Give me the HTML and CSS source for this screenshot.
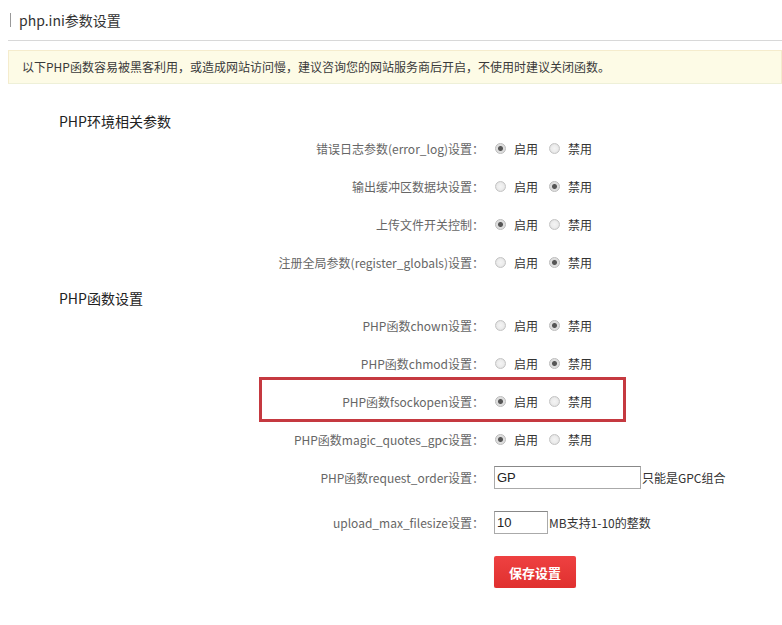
FILE: index.html
```html
<!DOCTYPE html>
<html lang="zh-CN">
<head>
    <meta charset="UTF-8">
    <meta name="viewport" content="width=device-width, initial-scale=1.0">
    <title>php.ini参数设置</title>
    <link rel="stylesheet" href="styles.css">
</head>
<body>
    <div class="page">
        <!-- Page Title -->
        <div class="page-title"><span>php.ini参数设置</span></div>

        <!-- Notice -->
        <div class="notice">以下PHP函数容易被黑客利用，或造成网站访问慢，建议咨询您的网站服务商后开启，不使用时建议关闭函数。</div>

        <div class="settings">
            <!-- Environment -->
            <h3>PHP环境相关参数</h3>
            <div class="form-row">
                <label class="row-label">错误日志参数(error_log)设置：</label>
                <div class="radio-group">
                    <label><input type="radio" name="error_log" checked>启用</label>
                    <label><input type="radio" name="error_log">禁用</label>
                </div>
            </div>
            <div class="form-row">
                <label class="row-label">输出缓冲区数据块设置：</label>
                <div class="radio-group">
                    <label><input type="radio" name="output_buffering">启用</label>
                    <label><input type="radio" name="output_buffering" checked>禁用</label>
                </div>
            </div>
            <div class="form-row">
                <label class="row-label">上传文件开关控制：</label>
                <div class="radio-group">
                    <label><input type="radio" name="file_uploads" checked>启用</label>
                    <label><input type="radio" name="file_uploads">禁用</label>
                </div>
            </div>
            <div class="form-row">
                <label class="row-label">注册全局参数(register_globals)设置：</label>
                <div class="radio-group">
                    <label><input type="radio" name="register_globals">启用</label>
                    <label><input type="radio" name="register_globals" checked>禁用</label>
                </div>
            </div>

            <!-- Functions -->
            <h3 class="second">PHP函数设置</h3>
            <div class="form-row">
                <label class="row-label">PHP函数chown设置：</label>
                <div class="radio-group">
                    <label><input type="radio" name="chown">启用</label>
                    <label><input type="radio" name="chown" checked>禁用</label>
                </div>
            </div>
            <div class="form-row">
                <label class="row-label">PHP函数chmod设置：</label>
                <div class="radio-group">
                    <label><input type="radio" name="chmod">启用</label>
                    <label><input type="radio" name="chmod" checked>禁用</label>
                </div>
            </div>
            <div class="form-row">
                <label class="row-label">PHP函数fsockopen设置：</label>
                <div class="radio-group">
                    <label><input type="radio" name="fsockopen" checked>启用</label>
                    <label><input type="radio" name="fsockopen">禁用</label>
                </div>
                <div class="highlight"></div>
            </div>
            <div class="form-row">
                <label class="row-label">PHP函数magic_quotes_gpc设置：</label>
                <div class="radio-group">
                    <label><input type="radio" name="magic_quotes_gpc" checked>启用</label>
                    <label><input type="radio" name="magic_quotes_gpc">禁用</label>
                </div>
            </div>
            <div class="form-row">
                <label class="row-label" for="request_order">PHP函数request_order设置：</label>
                <input type="text" class="text-input wide" id="request_order" value="GP">
                <span class="hint">只能是GPC组合</span>
            </div>
            <div class="form-row upload">
                <label class="row-label" for="upload_max">upload_max_filesize设置：</label>
                <input type="text" class="text-input short" id="upload_max" value="10">
                <span class="hint">MB支持1-10的整数</span>
            </div>

            <button class="save-btn">保存设置</button>
        </div>
    </div>
</body>
</html>
```

FILE: styles.css
```css
/* General Styling */
body {
    margin: 0;
    padding: 0 0 0 8px;
    font-family: "Microsoft YaHei", "Noto Sans CJK SC", sans-serif;
    font-size: 12px;
    color: #333;
    background: #fff;
}

/* Page Title */
.page-title {
    height: 40px;
    padding-left: 2px;
    display: flex;
    align-items: center;
    border-bottom: 1px solid #d8d8d8;
}

.page-title span {
    border-left: 1px solid #999;
    padding-left: 8px;
    font-size: 14px;
    line-height: 14px;
    color: #333;
}

/* Notice */
.notice {
    margin-top: 9px;
    height: 32px;
    line-height: 32px;
    padding-left: 13px;
    background: #fdfbe6;
    border: 1px solid #f5eccd;
    border-bottom-color: #eef0d8;
    color: #3a3a3a;
}

/* Settings Form */
.settings h3 {
    margin: 29px 0 0 51px;
    font-size: 14px;
    line-height: 16px;
    font-weight: normal;
    color: #222;
}

.settings h3.second {
    margin-top: 9px;
}

.form-row {
    position: relative;
    display: flex;
    align-items: center;
    height: 38px;
}

.form-row.upload {
    margin-top: 7px;
}

.row-label {
    width: 476px;
    margin-right: 10px;
    text-align: right;
    color: #666;
}

/* Radio Styling */
.radio-group {
    display: flex;
    align-items: center;
}

.radio-group label {
    display: flex;
    align-items: center;
    margin-right: 10px;
    color: #333;
}

.radio-group input {
    appearance: none;
    -webkit-appearance: none;
    width: 11px;
    height: 11px;
    margin: 0 8px 0 1px;
    border: 1px solid #c4c4c4;
    border-radius: 50%;
    background: radial-gradient(circle, #f4f4f4 0, #ececec 50%, #d6d6d6 100%);
}

.radio-group input:checked {
    background: radial-gradient(circle, #555 0, #555 2px, #dcdcdc 3px, #e6e6e6 100%);
    border-color: #bbb;
}

/* Text Inputs */
.text-input {
    box-sizing: border-box;
    height: 23px;
    padding: 0 2px;
    border: 1px solid #aaa;
    border-top-color: #888;
    font-family: "Liberation Sans", Arial, sans-serif;
    font-size: 13px;
    color: #222;
}

.text-input.wide {
    width: 147px;
}

.text-input.short {
    width: 54px;
}

.hint {
    margin-left: 1px;
    color: #333;
}

/* Save Button */
.save-btn {
    display: block;
    margin: 15px 0 0 486px;
    width: 82px;
    height: 32px;
    border: none;
    border-radius: 2px;
    background: linear-gradient(#ee4141, #e0302f);
    box-shadow: 0 1px 1px rgba(0, 0, 0, 0.15);
    color: #fff;
    font-family: inherit;
    font-size: 13px;
    font-weight: bold;
    cursor: pointer;
}

/* Annotation box */
.highlight {
    position: absolute;
    left: 251px;
    top: -5px;
    width: 367px;
    height: 45px;
    box-sizing: border-box;
    border: 3px solid #c53940;
    pointer-events: none;
}
```
